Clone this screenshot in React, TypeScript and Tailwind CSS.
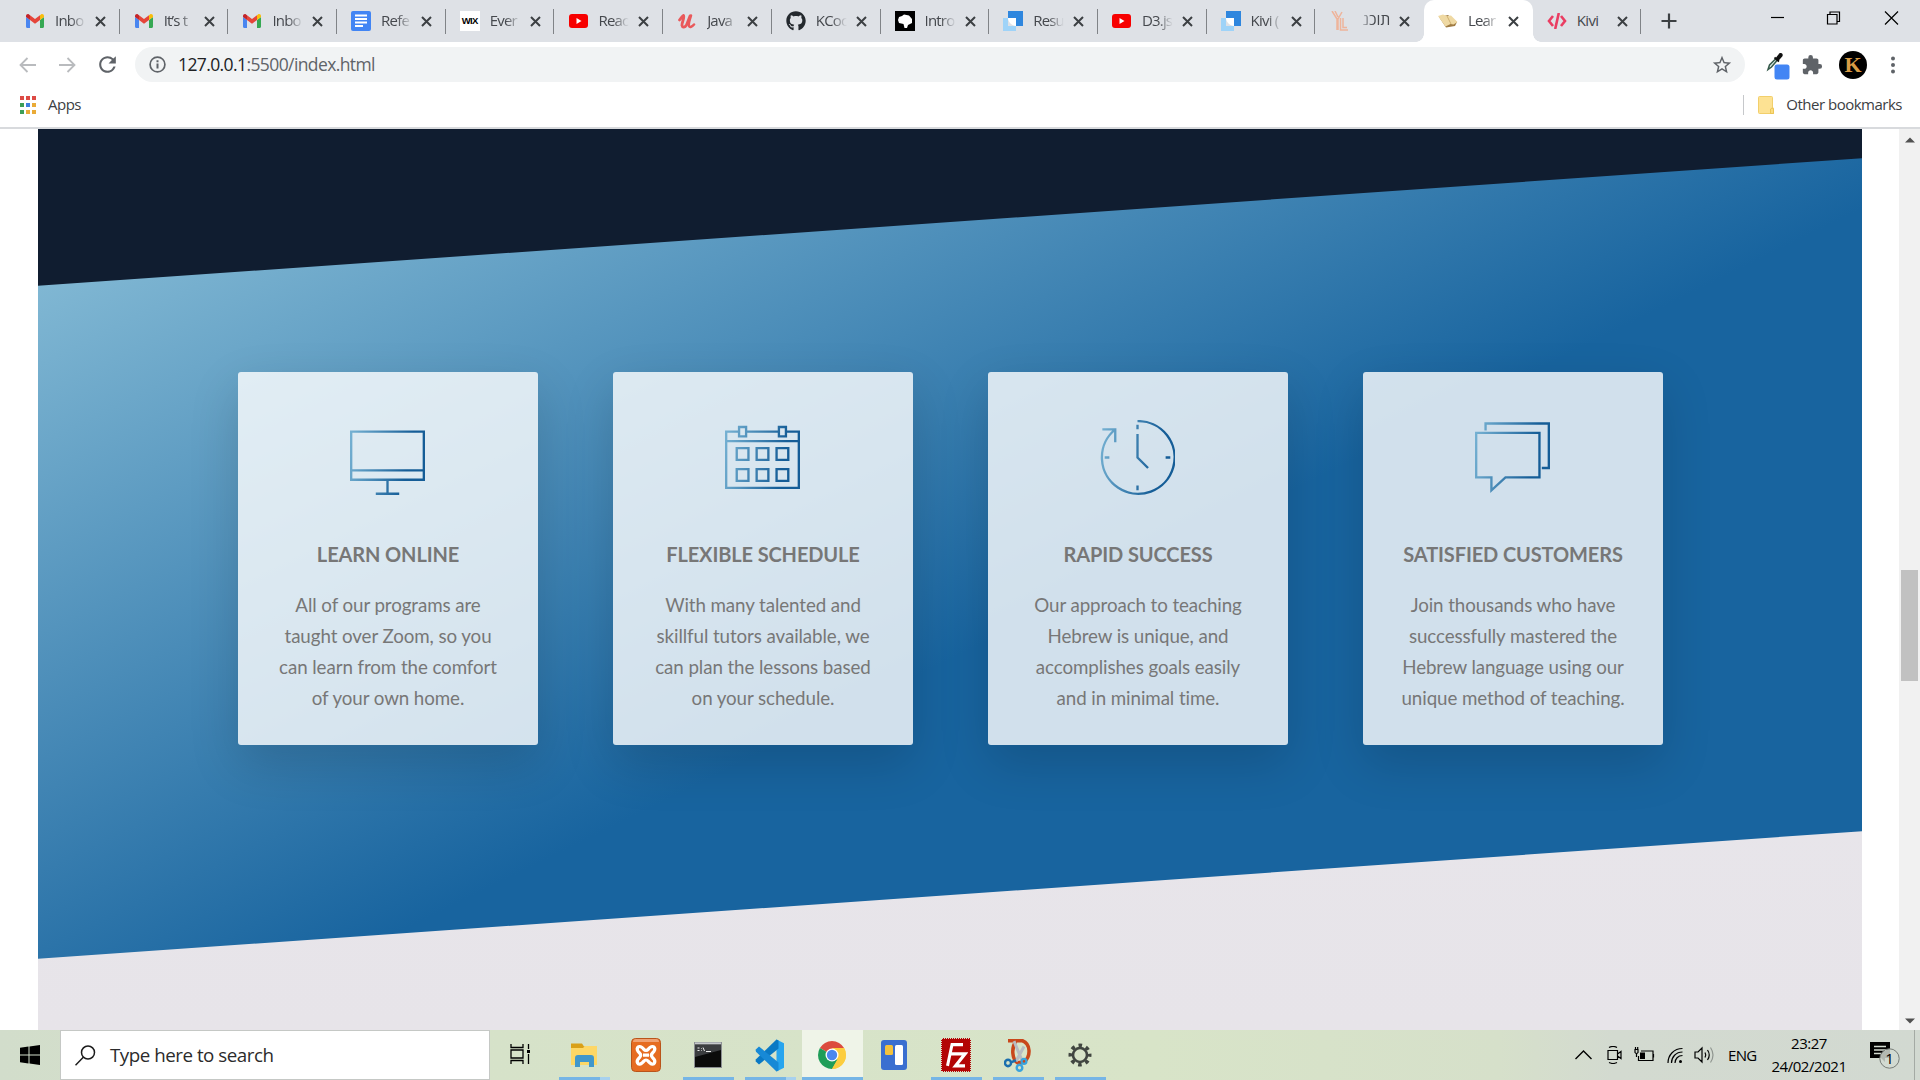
import type { ReactNode } from "react";
import { FaGithub } from "react-icons/fa";
import { MdExtension, MdRefresh, MdStarBorder } from "react-icons/md";

const ui = "font-['Open_Sans','Noto_Sans',sans-serif]";

/* ---------- Favicons ---------- */

const Gmail = () => (
  <svg width="18" height="14" viewBox="0 0 18 14">
    <path d="M0 2v10.5C0 13.300.6 14 1.400 14H4V6L0 3z" fill="#4a86f0" />
    <path d="M18 2v10.500c0 .8-.6 1.500-1.400 1.500H14V6l4-3z" fill="#36a853" />
    <path d="M14 6V1.200l1-.8C16.300-.5 18 .4 18 2v1z" fill="#f9bc0a" />
    <path d="M4 1.200 9 5l5-3.800V6L9 9.800 4 6z" fill="#e5453a" />
    <path d="M0 2C0 .4 1.700-.5 3 .4l1 .8V6L0 3z" fill="#c3252a" />
  </svg>
);

const Docs = () => (
  <svg width="20" height="20" viewBox="0 0 20 20">
    <rect width="20" height="20" rx="2" fill="#4285f4" />
    <path d="M4 4.500h12M4 8h12M4 11.500h12M4 15h8" stroke="#fff" strokeWidth="1.800" />
  </svg>
);

const Wix = () => (
  <div className="flex h-5 w-5 items-center justify-center bg-white font-['Liberation_Sans',sans-serif] text-[9.5px] font-bold tracking-[-0.6px] text-black">
    WIX
  </div>
);

const YouTube = () => (
  <svg width="19" height="14" viewBox="0 0 19 14">
    <rect width="19" height="14" rx="3" fill="#f70000" />
    <path d="m7.500 4 5 3-5 3z" fill="#fff" />
  </svg>
);

const Udemy = () => (
  <svg width="18" height="15" viewBox="0 0 18 15" fill="none" stroke="#e9595b" strokeLinecap="round">
    <path d="M1.500 6C3 4 4.500 2 5.500 1.500 7 3 3.500 9 4 11.500c.5 2.500 3 2 4.500-.5L12 2" strokeWidth="2.800" />
    <path d="M13 1.500c-1 4-3 8-2 10.500.8 1.800 3 .8 5-1.500" strokeWidth="2.500" />
  </svg>
);

const Github = () => <FaGithub size={20} color="#24292e" />;

const Head = () => (
  <svg width="20" height="20" viewBox="0 0 20 20">
    <rect width="20" height="20" fill="#000" />
    <path d="M3 9 4 6l3-1 2-1.500 5 1 3 3.500v4l-4 2-1 3H9.500l-1-4L4 12z" fill="#fff" />
  </svg>
);

const Resume = () => (
  <svg width="20" height="20" viewBox="0 0 20 20">
    <path d="M0 7h5v8h8v5H0z" fill="#9fd3f8" />
    <path d="M5 0h15v15h-7V7H5z" fill="#2e86de" />
    <path d="M5 7h8v8C9 15 5 11 5 7z" fill="#fff" />
  </svg>
);

const YL = () => (
  <svg width="17" height="20" viewBox="0 0 17 20" fill="none" stroke="#eeb49b" strokeWidth="1.500">
    <path d="M1 0l5 8v11M4 0l3 6M11 1 7 8v11M9.500 7v12H17M12 7v9.500h4" />
  </svg>
);

const Book = () => (
  <svg width="20" height="14" viewBox="0 0 20 14">
    <path d="m1 3 9-2 9 7-2 4-9 1.500z" fill="#9f7b43" />
    <path d="m0 2 5-1.500L9 2l4-.5 6.500 6.500-4 2.500-3-.5-5 2.500z" fill="#efd9a3" />
    <path d="m9 2 4 8" stroke="#c7a565" strokeWidth=".8" />
  </svg>
);

const CodeTag = () => (
  <svg width="20" height="16" viewBox="0 0 20 16" fill="none" stroke="#ea3d62" strokeWidth="2.600">
    <path d="M6 3 2 8l4 5M14 3l4 5-4 5M11.800 0 8.200 16" />
  </svg>
);

const X = () => (
  <svg width="11" height="11" viewBox="0 0 11 11" stroke="#3c4043" strokeWidth="2">
    <path d="m1 1 9 9M10 1l-9 9" />
  </svg>
);

const tabs: { title: string; icon: ReactNode; active?: boolean; divider?: boolean; rtl?: boolean }[] = [
  { title: "Inbo", icon: <Gmail />, divider: true },
  { title: "It’s t", icon: <Gmail />, divider: true },
  { title: "Inbo", icon: <Gmail />, divider: true },
  { title: "Refe", icon: <Docs />, divider: true },
  { title: "Ever", icon: <Wix />, divider: true },
  { title: "Reac", icon: <YouTube />, divider: true },
  { title: "Java", icon: <Udemy />, divider: true },
  { title: "KCoc", icon: <Github />, divider: true },
  { title: "Intro", icon: <Head />, divider: true },
  { title: "Resu", icon: <Resume />, divider: true },
  { title: "D3.js", icon: <YouTube />, divider: true },
  { title: "Kivi (", icon: <Resume />, divider: true },
  { title: "תוכנ", icon: <YL />, rtl: true },
  { title: "Lear", icon: <Book />, active: true },
  { title: "Kivi", icon: <CodeTag />, divider: true },
];

function TabStrip() {
  return (
    <div className="flex h-[42px] shrink-0 bg-[#dee1e6] pl-[11px]">
      {tabs.map((t, i) => (
        <div
          key={i}
          className={
            t.active
              ? "relative flex w-[108.7px] shrink-0 items-center rounded-t-[10px] bg-white pl-[14px] before:absolute before:bottom-0 before:-left-2 before:h-2 before:w-2 before:bg-[radial-gradient(circle_at_0_0,#dee1e6_7.5px,#fff_8px)] after:absolute after:bottom-0 after:-right-2 after:h-2 after:w-2 after:bg-[radial-gradient(circle_at_100%_0,#dee1e6_7.5px,#fff_8px)]"
              : "relative flex w-[108.7px] shrink-0 items-center pl-[14px]"
          }
        >
          <div className="flex w-5 shrink-0 justify-center">{t.icon}</div>
          <div
            dir={t.rtl ? "rtl" : "ltr"}
            className={
              t.rtl
                ? "mb-[2px] ml-[10px] w-[31px] text-[15.5px] whitespace-nowrap text-[#45484d] [mask-image:linear-gradient(to_left,black_55%,transparent)]"
                : t.title === "Kivi"
                  ? "mb-[2px] ml-[10px] w-[31px] text-[15px] tracking-[-0.6px] whitespace-nowrap text-[#45484d]"
                  : "mb-[2px] ml-[10px] w-[31px] text-[15px] tracking-[-0.8px] whitespace-nowrap text-[#45484d] [mask-image:linear-gradient(to_right,black_50%,transparent)]"
            }
          >
            {t.title}
          </div>
          <div className="ml-[9px]">
            <X />
          </div>
          {t.divider && <div className="absolute right-0 h-[25px] w-px bg-[#808387]" />}
        </div>
      ))}
      <div className="flex w-[55px] items-center justify-center">
        <svg width="16" height="16" viewBox="0 0 16 16" stroke="#3c4043" strokeWidth="2.200">
          <path d="M8 .5v15M.5 8h15" />
        </svg>
      </div>
      <div className="ml-auto flex h-9 items-center text-black">
        <svg width="58" height="14" viewBox="0 0 58 14" stroke="currentColor" strokeWidth="1.200">
          <path d="M24 6.500h13" />
        </svg>
        <svg width="58" height="14" viewBox="0 0 58 14" fill="none" stroke="currentColor" strokeWidth="1.200">
          <path d="M22.500 3.500h9.500v9.500h-9.500zM25 3.500V1h9.500v9.500H32" />
        </svg>
        <svg width="57" height="14" viewBox="0 0 57 14" stroke="currentColor" strokeWidth="1.200">
          <path d="m22 .5 13 13M35 .5l-13 13" />
        </svg>
      </div>
    </div>
  );
}

function Toolbar() {
  return (
    <div className="flex h-[45px] shrink-0 items-center bg-white">
      <div className="flex w-[135px] items-center pl-[19px] text-[#5f6368]">
        <svg width="17" height="16" viewBox="0 0 17 16" fill="none" stroke="#b9bbbe" strokeWidth="1.800">
          <path d="M17 8H2M8.500 1 1.500 8l7 7" />
        </svg>
        <svg className="ml-[23px]" width="17" height="16" viewBox="0 0 17 16" fill="none" stroke="#b9bbbe" strokeWidth="1.800">
          <path d="M0 8h15M8.500 1l7 7-7 7" />
        </svg>
        <MdRefresh className="ml-[19px]" size={25} />
      </div>
      <div className="flex h-[35px] w-[1610px] items-center rounded-full bg-[#f1f3f4] pr-[12px] pl-[14px]">
        <svg width="17" height="17" viewBox="0 0 17 17" fill="none" stroke="#5f6368">
          <circle cx="8.500" cy="8.500" r="7.400" strokeWidth="1.700" />
          <path d="M8.500 7.500v5M8.500 4.300v1.900" strokeWidth="2" />
        </svg>
        <div className="ml-[12px] text-[17.5px] tracking-[-0.6px] text-[#5f6368]">
          <span className="text-[#202124]">127.0.0.1</span>:5500/index.html
        </div>
        <MdStarBorder className="ml-auto text-[#5f6368]" size={22} />
      </div>
      <svg className="ml-[18px]" width="27" height="30" viewBox="0 0 27 30">
        <path d="m5 19.500 1.500-4.500 6-6 1.500 1.500-5.500 6.500z" fill="#dff0ea" stroke="#35594a" strokeWidth="1.500" />
        <path d="m11.500 7.500 4.500 4M13.500 8.500l3-4c1-1.500 3-.2 2 1.500l-3.500 4z" fill="#111" stroke="#111" strokeWidth="1.800" />
        <rect x="11.500" y="14.500" width="15" height="15" rx="2.500" fill="#4285f4" />
      </svg>
      <MdExtension className="ml-[11px] text-[#5f6368]" size={22} />
      <div className="ml-[16px] flex h-7 w-7 items-center justify-center rounded-full bg-black font-['Liberation_Serif',serif] text-[22px] leading-none font-bold text-[#d99c46]">
        K
      </div>
      <svg className="ml-[23px]" width="6" height="18" viewBox="0 0 6 18" fill="#5f6368">
        <circle cx="3" cy="2.500" r="2" />
        <circle cx="3" cy="9" r="2" />
        <circle cx="3" cy="15.500" r="2" />
      </svg>
    </div>
  );
}

function BookmarksBar() {
  return (
    <div className="flex h-[42px] shrink-0 items-center border-b-2 border-[#d8dadd] bg-white pb-[5px] text-[15px] text-[#3c4043]">
      <div className="mt-[1px] ml-5 grid w-4 grid-cols-3 gap-[2px]">
        <i className="h-1 bg-[#dd4b45]" /><i className="h-1 bg-[#dd4b45]" /><i className="h-1 bg-[#dd4b45]" />
        <i className="mt-[1px] h-1 bg-[#3d9e57]" /><i className="mt-[1px] h-1 bg-[#3f7fe0]" /><i className="mt-[1px] h-1 bg-[#eaab37]" />
        <i className="mt-[1px] h-1 bg-[#3d9e57]" /><i className="mt-[1px] h-1 bg-[#eaab37]" /><i className="mt-[1px] h-1 bg-[#eaab37]" />
      </div>
      <span className="ml-3 tracking-[-0.5px]">Apps</span>
      <div className="ml-auto h-5 w-px bg-[#c6c8cb]" />
      <svg className="ml-[14px]" width="16" height="18" viewBox="0 0 16 18">
        <path d="M1.500.5h12a1 1 0 0 1 1 1V12h1v5.500h-14a1 1 0 0 1-1-1v-15a1 1 0 0 1 1-1z" fill="#fde293" stroke="#f2cf6b" />
        <path d="M12.500 17.500V13q1.500-2 3 0v4.500z" fill="#fbdc7d" stroke="#e9c04f" strokeWidth=".8" />
      </svg>
      <span className="mr-[18px] ml-[12px] tracking-[-0.5px]">Other bookmarks</span>
    </div>
  );
}

/* ---------- Feature cards ---------- */

const iconPaths = {
  display: "M1 10h62v41H1zM1 43h62M32 51v12M22 63h20",
  calendar:
    "M12 10H1v48h62V10H52M18 10h28M1 18h62M12 6h6v8h-6zM46 6h6v8h-6zM10 24h10v10H10zM27 24h10v10H27zM44 24h10v10H44zM10 42h10v10H10zM27 42h10v10H27zM44 42h10v10H44z",
  clock:
    "M32 1a31 31 0 1 1-19 7M2 8h11v11M32 12v20l9 9M32 4v4M32 56v4M4 32h4M56 32h4",
  chat: "M1 11h54v38H26L14 60V49H1zM9 9V3h54v38h-6",
};

const features: { icon: keyof typeof iconPaths; title: string; lines: string[] }[] = [
  {
    icon: "display",
    title: "Learn online",
    lines: ["All of our programs are", "taught over Zoom, so you", "can learn from the comfort", "of your own home."],
  },
  {
    icon: "calendar",
    title: "Flexible schedule",
    lines: ["With many talented and", "skillful tutors available, we", "can plan the lessons based", "on your schedule."],
  },
  {
    icon: "clock",
    title: "Rapid success",
    lines: ["Our approach to teaching", "Hebrew is unique, and", "accomplishes goals easily", "and in minimal time."],
  },
  {
    icon: "chat",
    title: "Satisfied customers",
    lines: ["Join thousands who have", "successfully mastered the", "Hebrew language using our", "unique method of teaching."],
  },
];

function FeatureIcon({ name }: { name: keyof typeof iconPaths }) {
  return (
    <svg className="mr-[1px]" width="75" height="75" viewBox="0 0 64 64" fill="none" strokeWidth="2" stroke={`url(#stroke-${name})`}>
      <defs>
        <linearGradient id={`stroke-${name}`} gradientUnits="userSpaceOnUse" x1="0" y1="0" x2="64" y2="12">
          <stop offset="0" stopColor="#7ab5d5" />
          <stop offset=".85" stopColor="#155d97" />
        </linearGradient>
      </defs>
      <path d={iconPaths[name]} />
    </svg>
  );
}

function Page() {
  return (
    <div className="flex min-h-0 flex-1 bg-white">
      <main className="ml-[38px] flex w-[1824px] flex-col overflow-hidden bg-[linear-gradient(to_bottom,#101d30_0,#101d30_500px,#e8e6eb_500px,#e7e4e9_100%)] font-['Lato',sans-serif] text-[#777]">
        <section className="mt-[92.5px] flex h-[673px] shrink-0 -skew-y-4 items-center justify-center bg-[linear-gradient(157deg,#80b7d3_0%,#18649f_57%)]">
          <div className="flex skew-y-4 gap-[75px]">
            {features.map((f) => (
              <article
                key={f.title}
                className="flex h-[373px] w-[300px] flex-col items-center rounded-[3px] bg-white/80 pt-12 shadow-[0_19px_50px_rgba(0,0,0,0.15)]"
              >
                <FeatureIcon name={f.icon} />
                <h3 className="mt-[44px] text-[20px] leading-[30px] font-bold tracking-[-0.12px] whitespace-nowrap uppercase">{f.title}</h3>
                <p className="mt-[20px] text-center text-[18.75px] leading-[31px] tracking-[-0.09px] whitespace-nowrap">
                  {f.lines.map((l) => (
                    <span key={l} className="block">{l}</span>
                  ))}
                </p>
              </article>
            ))}
          </div>
        </section>
      </main>
      <div className="ml-auto flex w-[21px] flex-col items-center bg-[#f1f1f1]">
        <svg className="mt-2" width="10" height="6" viewBox="0 0 10 6" fill="#505050"><path d="m0 5.500 5-5 5 5z" /></svg>
        <div className="mt-[427px] h-[111px] w-[17px] bg-[#c1c1c1]" />
        <svg className="mt-auto mb-[6px]" width="10" height="6" viewBox="0 0 10 6" fill="#505050"><path d="m0 .5 5 5 5-5z" /></svg>
      </div>
    </div>
  );
}

/* ---------- Taskbar ---------- */

const Explorer = () => (
  <svg width="28" height="28" viewBox="0 0 28 28">
    <path d="M1 2.500h11l2 3h12V10H1z" fill="#d9a018" />
    <path d="M1 7h12l2-2h12v19H1z" fill="#fdd766" />
    <path d="M5 26v-9q0-3 3-3h13q3 0 3 3v9h-5v-5h-9v5z" fill="#4197cb" />
  </svg>
);

const Xampp = () => (
  <svg width="30" height="34" viewBox="0 0 30 34">
    <rect x=".5" y=".5" width="29" height="33" rx="4" fill="#e66c21" stroke="#b9541a" />
    <path d="M2 4q0-3 3-3h20q3 0 3 3z" fill="#f0a273" />
    <path
      d="M8.500 15C4 11 7 6.500 11 9.500c2 1.500 2 3 4 3s2-1.500 4-3c4-3 7 1.500 2.500 5.500-1.500 1.500-1.500 3 0 4.500 4.500 4 1.500 9-2.500 5.500-2-1.500-2-3-4-3s-2 1.500-4 3c-4 3.500-7-1.500-2.500-5.500 1.500-1.500 1.500-3 0-4.500zM12 17.200h6"
      fill="none"
      stroke="#fff"
      strokeWidth="3.200"
      strokeLinejoin="round"
    />
  </svg>
);

const Cmd = () => (
  <svg width="28" height="26" viewBox="0 0 28 26">
    <rect x=".5" y=".5" width="27" height="25" fill="#0b0b0b" stroke="#8c8f93" />
    <path d="M1 1.500h26" stroke="#c5c8cc" strokeWidth="2" />
    <path d="M1 3h26v5L1 15z" fill="#3b3d40" />
    <path d="M3.500 6h2M3.500 8.500h2M7.500 6v.6M7.500 8v.6M9 5.500l1.500 3.500M12 9.500h5" stroke="#eee" strokeWidth="1" />
  </svg>
);

const VsCode = () => (
  <svg width="30" height="33" viewBox="0 0 30 31" preserveAspectRatio="none">
    <path d="M21.500.5 29 4v23l-7.500 3.500z" fill="#27a5ee" />
    <path d="m21.500.5 2 1V9L4 24l-3.500-3L1 19z" fill="#0a79c4" />
    <path d="m21.500 30.500 2-1V22L4 7 .5 10l.5 2z" fill="#1789d6" />
  </svg>
);

const Chrome = () => (
  <svg width="28" height="28" viewBox="0 0 28 28">
    <path d="M14 14 1.900 7A14 14 0 0 1 26.100 7z" fill="#dc4b3e" />
    <path d="M14 14 26.100 7A14 14 0 0 1 14 28z" fill="#fccd3f" />
    <path d="M14 28A14 14 0 0 1 1.900 7L14 14l5.500 4.500z" fill="#1f9d58" />
    <path d="M14 7h12.100q1.900 3 1.900 7a14 14 0 0 1-14 14l6-10.500z" fill="#fccd3f" />
    <circle cx="14" cy="14" r="6.500" fill="#fff" />
    <circle cx="14" cy="14" r="5.200" fill="#4b87ee" />
  </svg>
);

const Board = () => (
  <svg width="26" height="30" viewBox="0 0 26 30">
    <rect width="26" height="30" rx="3" fill="#3a6fd0" />
    <rect x="4" y="5" width="8" height="10" rx="1.500" fill="#f4c23c" />
    <rect x="14" y="5" width="8" height="20" rx="1.500" fill="#fff" />
  </svg>
);

const FileZilla = () => (
  <div className="flex h-[34px] w-[30px] items-center justify-center border-[1.5px] border-dotted border-[#d7e0c8] bg-[#b30505]">
    <svg width="23" height="26" viewBox="0 0 23 24" preserveAspectRatio="none" fill="none" stroke="#fff" strokeWidth="3">
      <path d="M2.500 22 7 2.500h11M5 11h7M11.500 11H20l-9.500 11H20" />
    </svg>
  </div>
);

const Snip = () => (
  <svg width="28" height="33" viewBox="0 0 28 31" preserveAspectRatio="none" fill="none">
    <path d="M4 1.500h14c9 3 9 15 2 20l-6 1C8 20 7 8 12 2" stroke="#c9471b" strokeWidth="3.500" />
    <path d="m10 2 8 18M20 7l-8 14" stroke="#b7bcc2" strokeWidth="3" />
    <circle cx="4" cy="22.500" r="3" stroke="#1c6fae" strokeWidth="2.400" />
    <circle cx="15.500" cy="27" r="2.800" stroke="#3aa3dc" strokeWidth="2.400" />
    <circle cx="20" cy="21" r="2.400" stroke="#3aa3dc" strokeWidth="2.200" />
    <path d="m7 22 5-2" stroke="#1c6fae" strokeWidth="2.400" />
  </svg>
);

const Gear = () => (
  <svg width="24" height="24" viewBox="0 0 24 24" fill="none" stroke="#414641">
    <circle cx="12" cy="12" r="7" strokeWidth="2.600" />
    <circle cx="12" cy="12" r="9.700" strokeWidth="3.600" strokeDasharray="3.600 4.018" strokeDashoffset="1.800" />
  </svg>
);

const apps: { icon: ReactNode; tile?: boolean; bar?: string; tail?: boolean }[] = [
  { icon: <Explorer />, bar: "w-[41px]", tail: true },
  { icon: <Xampp /> },
  { icon: <Cmd />, bar: "w-[51px]" },
  { icon: <VsCode />, bar: "w-[41px]", tail: true },
  { icon: <Chrome />, bar: "w-[61px]", tile: true },
  { icon: <Board /> },
  { icon: <FileZilla />, bar: "w-[51px]" },
  { icon: <Snip />, bar: "w-[51px]" },
  { icon: <Gear />, bar: "w-[51px]" },
];

function Taskbar() {
  return (
    <div className="flex h-[50px] shrink-0 bg-[linear-gradient(to_right,#d2ddcb_0%,#d6e2c9_25%,#d8e4c8_60%,#d6e0ca_78%,#d3dad0_84%,#d2d9d1_100%)] text-black">
      <div className="flex w-[60px] items-center justify-center">
        <svg width="20" height="20" viewBox="0 0 20 20">
          <path d="M0 2.800 8.500 1.600v8H0zM9.500 1.500 20 0v9.600H9.500zM0 10.500h8.500v8L0 17.300zM9.500 10.500H20V20L9.500 18.600z" />
        </svg>
      </div>
      <div className="flex w-[430px] items-center border border-[#c5c8c5] bg-white pl-[14px]">
        <svg width="21" height="21" viewBox="0 0 21 21" fill="none" stroke="#1b1b1b" strokeWidth="1.500">
          <circle cx="13" cy="7.500" r="6.500" />
          <path d="m8.300 12.200-7.800 8" />
        </svg>
        <span className="ml-[14px] text-[18.75px] tracking-[-0.48px] text-[#2b2b2b]">Type here to search</span>
      </div>
      <div className="flex w-[63px] items-center justify-center pr-[3px] pb-[2px]">
        <svg width="21" height="20" viewBox="0 0 21 20" fill="none" stroke="#000" strokeWidth="1.300">
          <path d="M1 0v3.500h12V0M1 20v-3.500h12V20M1 6h12v8H1zM18.500 0v5M18.500 10v10" />
          <path d="M17 6h3v3h-3z" fill="#000" stroke="none" />
        </svg>
      </div>
      {apps.map((a, i) => (
        <div key={i} className="flex w-[62px] flex-col items-center">
          <div className={a.tile ? "flex h-[47px] w-[61px] items-center justify-center bg-[#eff4e8] pt-[3px]" : "flex h-[47px] items-center justify-center pt-[3px]"}>
            {a.icon}
          </div>
          <div className="flex h-[3px]">
            {a.bar && <div className={`${a.bar} bg-[#76b5e6]`} />}
            {a.tail && <div className="w-[10px] bg-[#a8d1ee]" />}
          </div>
        </div>
      ))}
      <div className="ml-auto flex items-center">
        <svg width="17" height="10" viewBox="0 0 17 10" fill="none" stroke="#000" strokeWidth="1.400"><path d="M.5 9 8.500 1l8 8" /></svg>
        <svg className="ml-[15px]" width="16" height="18" viewBox="0 0 16 18" fill="none" stroke="#000" strokeWidth="1.200">
          <path d="M1 4.500h9.500v9H1zM10.500 8 14 5.500v7L10.500 10M2 1.500q4-2 8 0M2 16.500q4 2 8 0" />
        </svg>
        <svg className="ml-[11px]" width="21" height="16" viewBox="0 0 21 16" fill="none" stroke="#000" strokeWidth="1.200">
          <path d="M7 4h12v9.500H4.500V9M19.500 7v3.500M1 2.500v3q1.500 2 3 0v-3zM2.500 6.500V10M1.500 0v2M3.700 0v2" />
          <path d="M6 5.500h5v6.500H6z" fill="#000" stroke="none" />
        </svg>
        <svg className="ml-[12px]" width="16" height="17" viewBox="0 0 16 17" fill="none" stroke="#000" strokeWidth="1.200">
          <path d="M1 16C1 8 7 1.500 15.500 1.500M4.500 16c0-6 4.500-11 11-11M8 16c0-4 3-7.500 7.500-7.500" />
          <circle cx="13.500" cy="14.500" r="1.500" fill="#000" stroke="none" />
        </svg>
        <svg className="ml-[11px]" width="21" height="18" viewBox="0 0 21 18" fill="none" stroke="#000" strokeWidth="1.200">
          <path d="M1 6h3l4-4v14l-4-4H1zM11 6.500q1.500 2.500 0 5M13.500 4q3.500 5 0 10" />
          <path d="M16.500 1.500q5 7.500 0 15" stroke="#909690" />
        </svg>
        <span className="ml-[13px] w-[29px] text-[15px] tracking-[-0.7px]">ENG</span>
        <div className="ml-[13px] w-[78px] text-center text-[15px] leading-[23px] tracking-[-0.45px] whitespace-nowrap">
          <div>23:27</div>
          <div>24/02/2021</div>
        </div>
        <svg className="mb-1 ml-[21px]" width="32" height="32" viewBox="0 0 32 32">
          <path d="M1 2h20v16h-5v4l-4-4H1z" fill="#000" transform="translate(0 3)" />
          <path d="M5 9.500h12M5 13h12M5 16.500h7" stroke="#d3dad0" strokeWidth="1.400" />
          <circle cx="20.500" cy="21.500" r="9.700" fill="#d2d9d1" fillOpacity=".85" stroke="#777c77" />
          <text x="20.500" y="26.500" textAnchor="middle" fontSize="15" fontFamily="Open Sans, sans-serif">1</text>
        </svg>
        <div className="mr-[5px] ml-[13px] h-[50px] w-px bg-[#a4aaa4]" />
      </div>
    </div>
  );
}

export default function App() {
  return (
    <div className={`flex h-[1080px] w-[1920px] flex-col overflow-hidden bg-white ${ui}`}>
      <TabStrip />
      <Toolbar />
      <BookmarksBar />
      <Page />
      <Taskbar />
    </div>
  );
}
